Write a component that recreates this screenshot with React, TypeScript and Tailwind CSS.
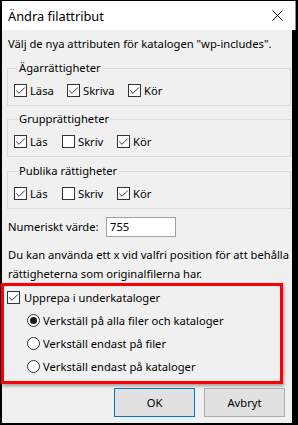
import React from "react";

const font = { fontFamily: '"Segoe UI", "Noto Sans", sans-serif' };

function Check({ checked }: { checked: boolean }) {
  return (
    <span className="w-[13px] h-[13px] border border-[#333333] bg-white flex-none flex items-center justify-center">
      {checked && (
        <svg width="11" height="11" viewBox="0 0 11 11">
          <polyline points="1.2,5.5 4,8.3 9.8,2.5" fill="none" stroke="#333333" strokeWidth="1" />
        </svg>
      )}
    </span>
  );
}

function Radio({ checked }: { checked: boolean }) {
  return (
    <span className="w-[13px] h-[13px] rounded-full border border-[#333333] bg-white flex-none flex items-center justify-center">
      {checked && <span className="w-[7px] h-[7px] rounded-full bg-[#1a1a1a]" />}
    </span>
  );
}

function CheckItem({ label, checked, w }: { label: string; checked: boolean; w: string }) {
  return (
    <div className={`flex items-center gap-[3px] ${w}`}>
      <Check checked={checked} />
      <span>{label}</span>
    </div>
  );
}

function Group({ title, children, mt }: { title: string; children: React.ReactNode; mt: string }) {
  return (
    <fieldset className={`ml-[5px] w-[284px] border border-[#dcdcdc] pl-[6px] pt-[8px] pb-[8px] ${mt}`}>
      <legend className="ml-[4px] px-[1px] h-[16px] leading-[16px]">{title}</legend>
      <div className="flex items-center h-[13px]">{children}</div>
    </fieldset>
  );
}

export default function App() {
  return (
    <div className="w-[298px] h-[425px] bg-black pt-px pl-[2px] overflow-hidden text-[11.2px] leading-[16px] text-black" style={font}>
      <div className="w-[294px] h-[29px] bg-white border-r border-[#8c8c8c] flex items-center pl-[6px]">
        <span className="text-[12.8px]">Ändra filattribut</span>
        <svg className="ml-auto mr-[12px]" width="11" height="11" viewBox="0 0 11 11">
          <path d="M0.5 0.5 L10.5 10.5 M10.5 0.5 L0.5 10.5" stroke="#000" strokeWidth="1" fill="none" />
        </svg>
      </div>
      <div className="w-[290px] h-[393px] bg-[#f0f0f0] flex flex-col">
        <div className="mt-[6px] ml-[6px] h-[16px]">Välj de nya attributen för katalogen "wp-includes".</div>

        <Group title="Ägarrättigheter" mt="mt-[8px]">
          <CheckItem label="Läsa" checked w="w-[53px]" />
          <CheckItem label="Skriva" checked w="w-[61px]" />
          <CheckItem label="Kör" checked w="" />
        </Group>
        <Group title="Grupprättigheter" mt="mt-[5px]">
          <CheckItem label="Läs" checked w="w-[48px]" />
          <CheckItem label="Skriv" checked={false} w="w-[55px]" />
          <CheckItem label="Kör" checked w="" />
        </Group>
        <Group title="Publika rättigheter" mt="mt-[6px]">
          <CheckItem label="Läs" checked w="w-[48px]" />
          <CheckItem label="Skriv" checked={false} w="w-[55px]" />
          <CheckItem label="Kör" checked w="" />
        </Group>

        <div className="mt-[8px] ml-[6px] flex items-center h-[20px]">
          <span className="w-[98px]">Numeriskt värde:</span>
          <div className="w-[70px] h-[20px] bg-white border border-[#a0a0a0] flex items-center pl-[3px]">755</div>
        </div>

        <div className="mt-[8px] ml-[6px] leading-[19px] whitespace-nowrap">
          Du kan använda ett x vid valfri position för att behålla
          <br />
          rättigheterna som originalfilerna har.
        </div>

        <div className="ml-[-1px] w-[282px] border-[3px] border-[#ff0000] pl-[3px] pb-[3px] flex flex-col shadow-[1px_2px_3px_rgba(0,0,0,0.35)]">
          <div className="h-[23px] flex items-center gap-[4px]">
            <Check checked />
            <span>Upprepa i underkataloger</span>
          </div>
          <div className="h-[23px] flex items-center gap-[3px] pl-[20px]">
            <Radio checked />
            <span>Verkställ på alla filer och kataloger</span>
          </div>
          <div className="h-[23px] flex items-center gap-[3px] pl-[20px]">
            <Radio checked={false} />
            <span>Verkställ endast på filer</span>
          </div>
          <div className="h-[23px] flex items-center gap-[3px] pl-[20px]">
            <Radio checked={false} />
            <span>Verkställ endast på kataloger</span>
          </div>
        </div>

        <div className="mt-[4px] flex gap-[9px] pl-[112px]">
          <button className="w-[81px] h-[29px] bg-[#e1e1e1] border border-[#0078d7]">OK</button>
          <button className="w-[81px] h-[29px] bg-[#e1e1e1] border border-[#adadad]">Avbryt</button>
        </div>
      </div>
    </div>
  );
}
